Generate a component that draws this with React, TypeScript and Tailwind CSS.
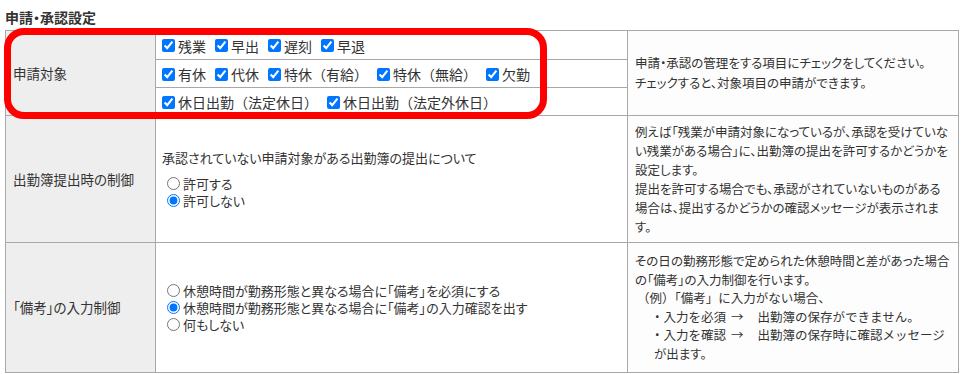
const font = '"Noto Sans CJK JP", "Noto Sans", sans-serif';

const row1 = ["残業", "早出", "遅刻", "早退"];
const row2 = ["有休", "代休", "特休（有給）", "特休（無給）", "欠勤"];
const row3 = ["休日出勤（法定休日）", "休日出勤（法定外休日）"];

function Check({ label }: { label: string }) {
  return (
    <label className="mr-[5px] inline-flex items-center text-[14px] leading-[18px]">
      <input type="checkbox" defaultChecked className="mr-[3px] ml-[4px] h-[13px] w-[13px]" />
      <span>{label}</span>
    </label>
  );
}

function Radio({ label, checked }: { label: string; checked?: boolean }) {
  return (
    <label className="flex h-[17px] items-center leading-[17px]">
      <input type="radio" defaultChecked={checked} className="mr-[3px] ml-[5px] h-[13px] w-[13px]" />
      <span>{label}</span>
    </label>
  );
}

function Arrow() {
  return <span className="mr-[14px] ml-[5px]">→</span>;
}

export default function App() {
  const cell = "border border-[#a8a8a8]";
  const label = `${cell} bg-[#eeeeee] pl-[7px] align-middle text-[13.5px]`;
  const desc = `${cell} bg-[#fdfdfd] px-[7px] align-middle text-[12.5px]`;

  return (
    <div
      className="h-[374px] w-[964px] bg-white pl-[5px] text-[#333333]"
      style={{ fontFamily: font, fontFeatureSettings: '"palt"' }}
    >
      <h2 className="pt-[9px] pb-[4px] text-[14px] leading-[17px] font-bold">申請・承認設定</h2>

      <div className="relative">
        <table className="w-[953px] table-fixed border-collapse">
          <colgroup>
            <col className="w-[150px]" />
            <col className="w-[472px]" />
            <col className="w-[331px]" />
          </colgroup>
          <tbody>
            <tr className="h-[29px]">
              <td rowSpan={3} className={label}>申請対象</td>
              <td className={`${cell} pl-[2px]`} style={{ fontFeatureSettings: "normal" }}>
                {row1.map((l) => <Check key={l} label={l} />)}
              </td>
              <td rowSpan={3} className={`${desc} leading-[20px]`}>
                申請・承認の管理をする項目にチェックをしてください。
                <br />
                チェックすると、対象項目の申請ができます。
              </td>
            </tr>
            <tr className="h-[28px]">
              <td className={`${cell} pl-[2px]`} style={{ fontFeatureSettings: "normal" }}>
                {row2.map((l) => <Check key={l} label={l} />)}
              </td>
            </tr>
            <tr className="h-[28px]">
              <td className={`${cell} pl-[2px]`} style={{ fontFeatureSettings: "normal" }}>
                {row3.map((l) => <Check key={l} label={l} />)}
              </td>
            </tr>

            <tr className="h-[127px]">
              <td className={label}>出勤簿提出時の制御</td>
              <td className={`${cell} pl-[6px] align-middle text-[13px]`}>
                <p className="mb-[9px] leading-[17px]">承認されていない申請対象がある出勤簿の提出について</p>
                <Radio label="許可する" />
                <Radio label="許可しない" checked />
              </td>
              <td className={`${desc} py-[4px] leading-[19px]`}>
                <div className="whitespace-nowrap">例えば「残業が申請対象になっているが、承認を受けていな</div>
                <div className="whitespace-nowrap">い残業がある場合」に、出勤簿の提出を許可するかどうかを</div>
                <div className="whitespace-nowrap">設定します。</div>
                <div className="whitespace-nowrap">提出を許可する場合でも、承認がされていないものがある</div>
                <div className="whitespace-nowrap">場合は、提出するかどうかの確認メッセージが表示されま</div>
                <div className="whitespace-nowrap">す。</div>
              </td>
            </tr>

            <tr className="h-[130px]">
              <td className={label}>「備考」の入力制御</td>
              <td className={`${cell} pl-[6px] align-middle text-[13px]`}>
                <Radio label="休憩時間が勤務形態と異なる場合に「備考」を必須にする" />
                <Radio label="休憩時間が勤務形態と異なる場合に「備考」の入力確認を出す" checked />
                <Radio label="何もしない" />
              </td>
              <td className={`${desc} py-[4px] leading-[18.5px]`}>
                <div className="whitespace-nowrap">その日の勤務形態で定められた休憩時間と差があった場合</div>
                <div className="whitespace-nowrap">の「備考」の入力制御を行います。</div>
                <div className="whitespace-nowrap pl-[2px]" style={{ fontFeatureSettings: "normal" }}>（例）「備考」に入力がない場合、</div>
                <div className="whitespace-nowrap pl-[16px]" style={{ fontFeatureSettings: "normal" }}>
                  ・入力を必須<Arrow />出勤簿の保存ができません。
                </div>
                <div className="whitespace-nowrap pl-[16px]" style={{ fontFeatureSettings: "normal" }}>
                  ・入力を確認<Arrow />出勤簿の保存時に確認メッセージ
                </div>
                <div className="whitespace-nowrap pl-[19px]">が出ます。</div>
              </td>
            </tr>
          </tbody>
        </table>

        <div className="pointer-events-none absolute top-[-2px] left-[-1px] h-[91px] w-[543px] rounded-[20px] border-[7px] border-[#ff0000]" />
      </div>
    </div>
  );
}
